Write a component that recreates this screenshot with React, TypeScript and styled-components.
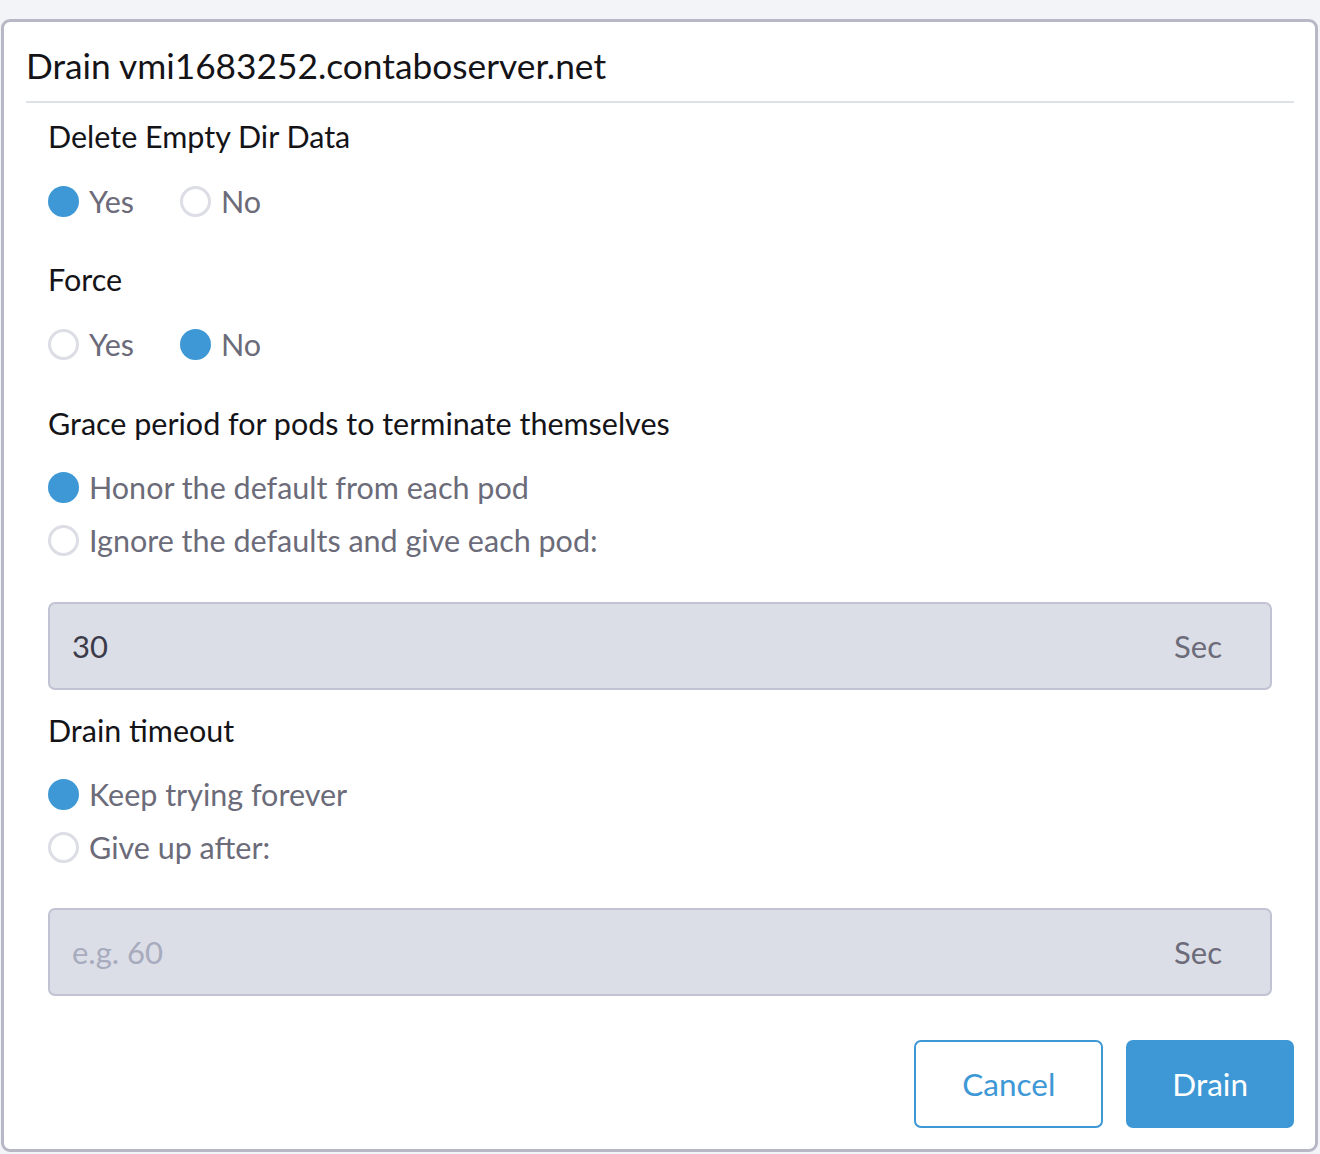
import React from "react";
import styled, { createGlobalStyle } from "styled-components";

const Global = createGlobalStyle`
  html, body { margin: 0; padding: 0; background: #f3f4f8; }
  body { font-family: Lato, "Open Sans", sans-serif; }
  * { box-sizing: border-box; }
`;

const Page = styled.div`
  padding: 19px 2px 2px 1px;
  width: 1320px;
`;

const Dialog = styled.div`
  background: #fff;
  border: 3px solid #b7b7c5;
  border-radius: 9px;
  height: 1133px;
  padding: 19px 21px 0 22px;
  display: flex;
  flex-direction: column;
`;

const Title = styled.h2`
  margin: 0;
  font-size: 35.3px;
  font-weight: 400;
  color: #141418;
  line-height: 50px;
  padding-bottom: 10px;
  border-bottom: 2px solid #dfe1e8;
`;

const Body = styled.div`
  padding: 0 0 0 22px;
  margin-right: 22px;
  display: flex;
  flex-direction: column;
`;

const Label = styled.div<{ $top: number }>`
  font-size: 30.5px;
  color: #141418;
  line-height: 36px;
  margin-top: ${(p) => p.$top}px;
`;

const InlineGroup = styled.div<{ $top: number }>`
  display: flex;
  gap: 46px;
  margin-top: ${(p) => p.$top}px;
`;

const StackGroup = styled.div<{ $top: number }>`
  display: flex;
  flex-direction: column;
  gap: 17px;
  margin-top: ${(p) => p.$top}px;
`;

const Option = styled.label`
  display: flex;
  align-items: center;
  gap: 10px;
  font-size: 30.5px;
  color: #6b6b79;
  line-height: 36px;
  cursor: pointer;
`;

const Circle = styled.span<{ $on: boolean }>`
  width: 31px;
  height: 31px;
  border-radius: 50%;
  flex: none;
  background: ${(p) => (p.$on ? "#3d98d5" : "#fff")};
  border: ${(p) => (p.$on ? "none" : "3px solid #dcdde5")};
`;

const Field = styled.div<{ $top: number }>`
  margin-top: ${(p) => p.$top}px;
  height: 88px;
  background: #dcdee7;
  border: 2px solid #c1c3d2;
  border-radius: 7px;
  display: flex;
  align-items: center;
  padding: 0 48px 0 22px;
`;

const Value = styled.span<{ $placeholder?: boolean }>`
  flex: 1;
  font-size: 31px;
  color: ${(p) => (p.$placeholder ? "#a7abbd" : "#3a3a48")};
`;

const Unit = styled.span`
  font-size: 31px;
  color: #6b6b79;
`;

const Footer = styled.div`
  margin-top: 44px;
  display: flex;
  justify-content: flex-end;
  gap: 23px;
`;

const Button = styled.button<{ $primary?: boolean }>`
  height: 88px;
  padding: 0 ${(p) => (p.$primary ? 44 : 46)}px;
  border-radius: 7px;
  font-family: Lato, sans-serif;
  font-size: 31.5px;
  border: 2px solid #3d98d5;
  background: ${(p) => (p.$primary ? "#3d98d5" : "#fff")};
  color: ${(p) => (p.$primary ? "#fff" : "#3d98d5")};
`;

const Radio = ({ on, children }: { on: boolean; children: React.ReactNode }) => (
  <Option>
    <Circle $on={on} />
    {children}
  </Option>
);

export default function App() {
  return (
    <>
      <Global />
      <Page>
        <Dialog>
          <Title>Drain vmi1683252.contaboserver.net</Title>
          <Body>
            <Label $top={15}>Delete Empty Dir Data</Label>
            <InlineGroup $top={29}>
              <Radio on>Yes</Radio>
              <Radio on={false}>No</Radio>
            </InlineGroup>
            <Label $top={42}>Force</Label>
            <InlineGroup $top={29}>
              <Radio on={false}>Yes</Radio>
              <Radio on>No</Radio>
            </InlineGroup>
            <Label $top={43}>Grace period for pods to terminate themselves</Label>
            <StackGroup $top={28}>
              <Radio on>Honor the default from each pod</Radio>
              <Radio on={false}>Ignore the defaults and give each pod:</Radio>
            </StackGroup>
            <Field $top={44}>
              <Value>30</Value>
              <Unit>Sec</Unit>
            </Field>
            <Label $top={22}>Drain timeout</Label>
            <StackGroup $top={28}>
              <Radio on>Keep trying forever</Radio>
              <Radio on={false}>Give up after:</Radio>
            </StackGroup>
            <Field $top={43}>
              <Value $placeholder>e.g. 60</Value>
              <Unit>Sec</Unit>
            </Field>
          </Body>
          <Footer>
            <Button>Cancel</Button>
            <Button $primary>Drain</Button>
          </Footer>
        </Dialog>
      </Page>
    </>
  );
}
